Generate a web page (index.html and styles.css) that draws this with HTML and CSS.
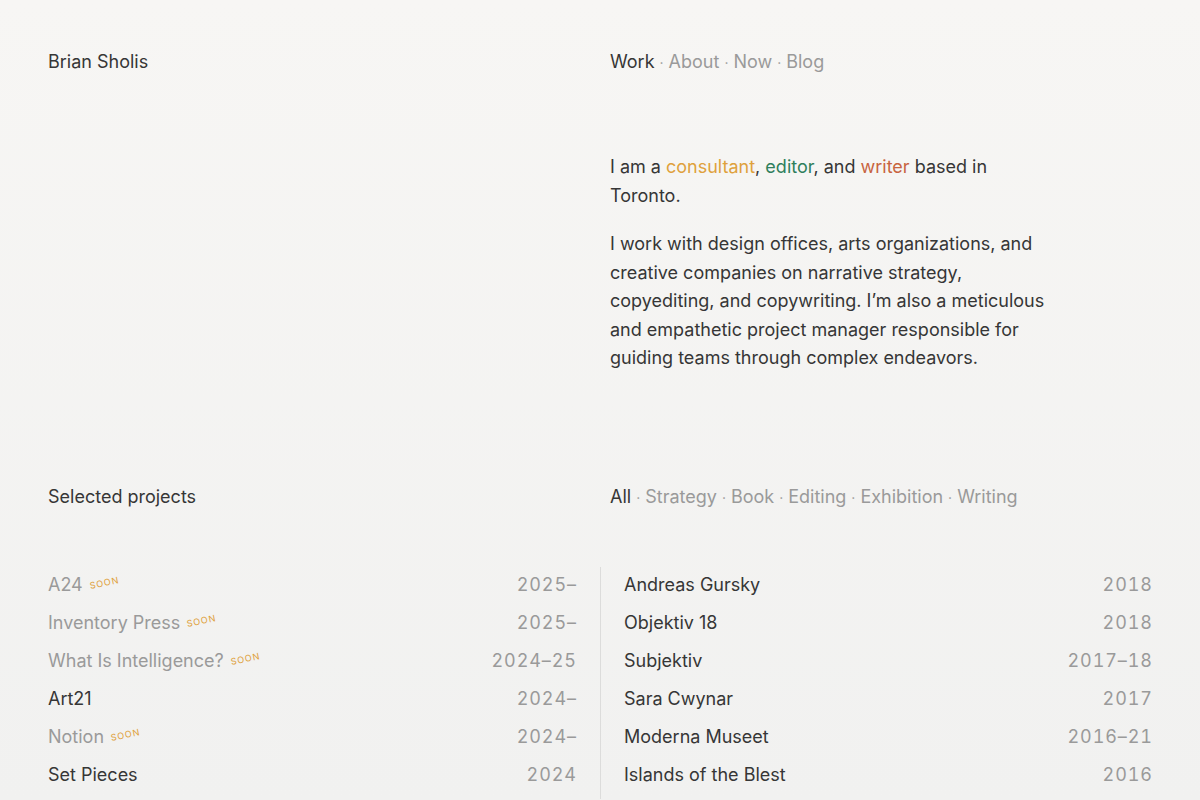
FILE: index.html
```html
<!DOCTYPE html>
<html lang="en">
<head>
  <meta charset="UTF-8" />
  <meta name="viewport" content="width=device-width, initial-scale=1.0" />
  <title>Brian Sholis</title>
  <link rel="stylesheet" href="styles.css">
</head>
<body>
  <div class="page">
    <!-- Header -->
    <header class="row header">
      <div class="name">Brian Sholis</div>
      <nav class="links">
        <a class="current" href="#">Work</a><span class="dot">·</span><a href="#">About</a><span class="dot">·</span><a href="#">Now</a><span class="dot">·</span><a href="#">Blog</a>
      </nav>
    </header>

    <!-- Intro -->
    <section class="row intro">
      <div></div>
      <div class="intro-text">
        <p>I am a <span class="c-orange">consultant</span>, <span class="c-green">editor</span>, and <span class="c-red">writer</span> based in Toronto.</p>
        <p>I work with design offices, arts organizations, and creative companies on narrative strategy, copyediting, and copywriting. I’m also a meticulous and empathetic project manager responsible for guiding teams through complex endeavors.</p>
      </div>
    </section>

    <!-- Projects -->
    <section class="row projects-head">
      <div class="name">Selected projects</div>
      <nav class="links">
        <a class="current" href="#">All</a><span class="dot">·</span><a href="#">Strategy</a><span class="dot">·</span><a href="#">Book</a><span class="dot">·</span><a href="#">Editing</a><span class="dot">·</span><a href="#">Exhibition</a><span class="dot">·</span><a href="#">Writing</a>
      </nav>
    </section>

    <div class="project-lists">
      <ul class="project-list">
        <li class="soon"><span class="title">A24 <span class="badge">Soon</span></span><span class="year">2025–</span></li>
        <li class="soon"><span class="title">Inventory Press <span class="badge">Soon</span></span><span class="year">2025–</span></li>
        <li class="soon"><span class="title">What Is Intelligence? <span class="badge">Soon</span></span><span class="year">2024–25</span></li>
        <li><span class="title">Art21</span><span class="year">2024–</span></li>
        <li class="soon"><span class="title">Notion <span class="badge">Soon</span></span><span class="year">2024–</span></li>
        <li><span class="title">Set Pieces</span><span class="year">2024</span></li>
      </ul>
      <ul class="project-list right">
        <li><span class="title">Andreas Gursky</span><span class="year">2018</span></li>
        <li><span class="title">Objektiv 18</span><span class="year">2018</span></li>
        <li><span class="title">Subjektiv</span><span class="year">2017–18</span></li>
        <li><span class="title">Sara Cwynar</span><span class="year">2017</span></li>
        <li><span class="title">Moderna Museet</span><span class="year">2016–21</span></li>
        <li><span class="title">Islands of the Blest</span><span class="year">2016</span></li>
      </ul>
    </div>
  </div>
</body>
</html>
```

FILE: styles.css
```css
html {
  background: linear-gradient(#f7f6f4, #f1f1f0);
  min-height: 100%;
}
body {
  margin: 0;
  font-family: Inter, 'Noto Sans', sans-serif;
  font-size: 18px;
  line-height: 28px;
  color: #363636;
}
.page {
  padding: 48px 48px 0;
}
.row {
  display: grid;
  grid-template-columns: 562px 1fr;
}
a {
  color: #9a9a9a;
  text-decoration: none;
}
a.current {
  color: #363636;
}
.dot {
  color: #9a9a9a;
  margin: 0 5px;
  font-size: 14px;
}
.intro {
  margin-top: 76px;
}
.intro-text {
  max-width: 440px;
  line-height: 28.5px;
}
.intro-text p {
  margin: 0 0 20px;
}
.c-orange { color: #dfa13c; }
.c-green { color: #2f7f5c; }
.c-red { color: #c8643f; }

.projects-head {
  margin-top: 90px;
}
.project-lists {
  margin-top: 55px;
  display: grid;
  grid-template-columns: 1fr 1fr;
}
.project-list {
  list-style: none;
  margin: 0;
  padding: 4px 24px 0 0;
}
.project-list.right {
  border-left: 1px solid #dcdcdb;
  padding: 4px 0 0 23px;
}
.project-list li {
  display: flex;
  justify-content: space-between;
  height: 38px;
  line-height: 28px;
}
.year {
  color: #9a9a9a;
  font-variant-numeric: tabular-nums;
  letter-spacing: 0.05em;
  margin-right: -0.05em;
}
.soon .title {
  color: #9a9a9a;
}
.badge {
  display: inline-block;
  margin-left: 2px;
  font-size: 9px;
  line-height: 9px;
  letter-spacing: 0.1em;
  text-transform: uppercase;
  color: #dfa13c;
  transform: rotate(-12deg) translateY(-3px);
  vertical-align: middle;
}
```
